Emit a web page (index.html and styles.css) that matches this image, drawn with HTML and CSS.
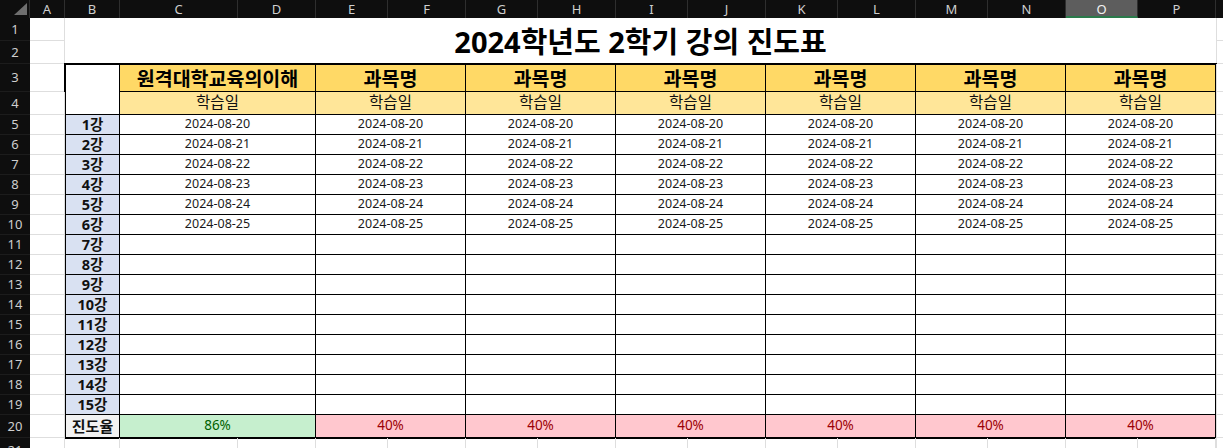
FILE: index.html
```html
<!DOCTYPE html>
<html lang="ko">
<head>
<meta charset="utf-8">
<title>2024학년도 2학기 강의 진도표</title>
<link rel="stylesheet" href="styles.css">
</head>
<body>
<div class="sheet">
  <!-- column headers -->
  <div class="corner"><svg width="30" height="18" viewBox="0 0 30 18"><polygon points="27,3 27,15 14,15" fill="#6f6f6f"/></svg></div>
  <div class="ch">A</div><div class="ch">B</div><div class="ch">C</div><div class="ch">D</div>
  <div class="ch">E</div><div class="ch">F</div><div class="ch">G</div><div class="ch">H</div>
  <div class="ch">I</div><div class="ch">J</div><div class="ch">K</div><div class="ch">L</div>
  <div class="ch">M</div><div class="ch">N</div><div class="ch sel">O</div><div class="ch">P</div>
  <div class="ch ch-rest"></div>

  <!-- row 1 -->
  <div class="rh">1</div><div class="gc"></div>
  <div class="title">2024학년도 2학기 강의 진도표</div>
  <div class="gc rest"></div>
  <!-- row 2 -->
  <div class="rh">2</div><div class="gc"></div><div class="gc rest"></div>
  <!-- row 3 -->
  <div class="rh">3</div><div class="gc"></div>
  <div class="table">
    <div class="c corner-cell"></div>
    <div class="c subj subj-first">원격대학교육의이해</div>
    <div class="c subj">과목명</div><div class="c subj">과목명</div><div class="c subj">과목명</div>
    <div class="c subj">과목명</div><div class="c subj">과목명</div><div class="c subj">과목명</div>

    <div class="c day">학습일</div><div class="c day">학습일</div><div class="c day">학습일</div><div class="c day">학습일</div>
    <div class="c day">학습일</div><div class="c day">학습일</div><div class="c day">학습일</div>

    <div class="c lab">1강</div><div class="c">2024-08-20</div><div class="c">2024-08-20</div><div class="c">2024-08-20</div><div class="c">2024-08-20</div><div class="c">2024-08-20</div><div class="c">2024-08-20</div><div class="c">2024-08-20</div>
    <div class="c lab">2강</div><div class="c">2024-08-21</div><div class="c">2024-08-21</div><div class="c">2024-08-21</div><div class="c">2024-08-21</div><div class="c">2024-08-21</div><div class="c">2024-08-21</div><div class="c">2024-08-21</div>
    <div class="c lab">3강</div><div class="c">2024-08-22</div><div class="c">2024-08-22</div><div class="c">2024-08-22</div><div class="c">2024-08-22</div><div class="c">2024-08-22</div><div class="c">2024-08-22</div><div class="c">2024-08-22</div>
    <div class="c lab">4강</div><div class="c">2024-08-23</div><div class="c">2024-08-23</div><div class="c">2024-08-23</div><div class="c">2024-08-23</div><div class="c">2024-08-23</div><div class="c">2024-08-23</div><div class="c">2024-08-23</div>
    <div class="c lab">5강</div><div class="c">2024-08-24</div><div class="c">2024-08-24</div><div class="c">2024-08-24</div><div class="c">2024-08-24</div><div class="c">2024-08-24</div><div class="c">2024-08-24</div><div class="c">2024-08-24</div>
    <div class="c lab">6강</div><div class="c">2024-08-25</div><div class="c">2024-08-25</div><div class="c">2024-08-25</div><div class="c">2024-08-25</div><div class="c">2024-08-25</div><div class="c">2024-08-25</div><div class="c">2024-08-25</div>
    <div class="c lab">7강</div><div class="c"></div><div class="c"></div><div class="c"></div><div class="c"></div><div class="c"></div><div class="c"></div><div class="c"></div>
    <div class="c lab">8강</div><div class="c"></div><div class="c"></div><div class="c"></div><div class="c"></div><div class="c"></div><div class="c"></div><div class="c"></div>
    <div class="c lab">9강</div><div class="c"></div><div class="c"></div><div class="c"></div><div class="c"></div><div class="c"></div><div class="c"></div><div class="c"></div>
    <div class="c lab">10강</div><div class="c"></div><div class="c"></div><div class="c"></div><div class="c"></div><div class="c"></div><div class="c"></div><div class="c"></div>
    <div class="c lab">11강</div><div class="c"></div><div class="c"></div><div class="c"></div><div class="c"></div><div class="c"></div><div class="c"></div><div class="c"></div>
    <div class="c lab">12강</div><div class="c"></div><div class="c"></div><div class="c"></div><div class="c"></div><div class="c"></div><div class="c"></div><div class="c"></div>
    <div class="c lab">13강</div><div class="c"></div><div class="c"></div><div class="c"></div><div class="c"></div><div class="c"></div><div class="c"></div><div class="c"></div>
    <div class="c lab">14강</div><div class="c"></div><div class="c"></div><div class="c"></div><div class="c"></div><div class="c"></div><div class="c"></div><div class="c"></div>
    <div class="c lab">15강</div><div class="c"></div><div class="c"></div><div class="c"></div><div class="c"></div><div class="c"></div><div class="c"></div><div class="c"></div>

    <div class="c total">진도율</div>
    <div class="c good">86%</div>
    <div class="c bad">40%</div><div class="c bad">40%</div><div class="c bad">40%</div>
    <div class="c bad">40%</div><div class="c bad">40%</div><div class="c bad">40%</div>
  </div>
  <div class="gc rest"></div>
  <!-- rows 4..20 -->
  <div class="rh">4</div><div class="gc"></div><div class="gc rest"></div>
  <div class="rh">5</div><div class="gc"></div><div class="gc rest"></div>
  <div class="rh">6</div><div class="gc"></div><div class="gc rest"></div>
  <div class="rh">7</div><div class="gc"></div><div class="gc rest"></div>
  <div class="rh">8</div><div class="gc"></div><div class="gc rest"></div>
  <div class="rh">9</div><div class="gc"></div><div class="gc rest"></div>
  <div class="rh">10</div><div class="gc"></div><div class="gc rest"></div>
  <div class="rh">11</div><div class="gc"></div><div class="gc rest"></div>
  <div class="rh">12</div><div class="gc"></div><div class="gc rest"></div>
  <div class="rh">13</div><div class="gc"></div><div class="gc rest"></div>
  <div class="rh">14</div><div class="gc"></div><div class="gc rest"></div>
  <div class="rh">15</div><div class="gc"></div><div class="gc rest"></div>
  <div class="rh">16</div><div class="gc"></div><div class="gc rest"></div>
  <div class="rh">17</div><div class="gc"></div><div class="gc rest"></div>
  <div class="rh">18</div><div class="gc"></div><div class="gc rest"></div>
  <div class="rh">19</div><div class="gc"></div><div class="gc rest"></div>
  <div class="rh">20</div><div class="gc"></div><div class="gc rest"></div>
  <!-- row 21 -->
  <div class="rh rh-last">21</div>
  <div class="gc"></div><div class="gc"></div><div class="gc"></div><div class="gc"></div>
  <div class="gc"></div><div class="gc"></div><div class="gc"></div><div class="gc"></div>
  <div class="gc"></div><div class="gc"></div><div class="gc"></div><div class="gc"></div>
  <div class="gc"></div><div class="gc"></div><div class="gc"></div><div class="gc"></div>
  <div class="gc rest"></div>
</div>
</body>
</html>
```

FILE: styles.css
```css
* { box-sizing: border-box; }

html, body {
  margin: 0;
  padding: 0;
  background: #ffffff;
  overflow: hidden;
}

body {
  width: 1223px;
  height: 448px;
  font-family: "Noto Sans", "Noto Sans CJK KR", sans-serif;
  color: #000;
}

.sheet {
  display: grid;
  width: 1223px;
  height: 448px;
  grid-template-columns: 30px 35px 55px 118px 78px repeat(6, 72px 78px) 1fr;
  grid-template-rows: 18px 23px 23px 28px 23px repeat(15, 20px) 23px 1fr;
  overflow: hidden;
}

/* ---- column headers ---- */
.corner {
  background: #0e0e0e;
  border-right: 1px solid #2c2c2c;
}
.corner svg { display: block; }

.ch {
  background: #0e0e0e;
  color: #cfcfcf;
  border-right: 1px solid #2e2e2e;
  font-size: 13px;
  line-height: 1;
  display: flex;
  align-items: center;
  justify-content: center;
  padding-top: 1px;
}
.ch.sel {
  background: #5d5d5d;
  color: #f2f2f2;
  border-bottom: 2px solid #2b7a4b;
  padding-top: 2px;
}
.ch-rest { border-right: none; }

/* ---- row headers ---- */
.rh {
  background: #0e0e0e;
  color: #cfcfcf;
  font-size: 13px;
  line-height: 1;
  display: flex;
  align-items: center;
  justify-content: center;
  border-bottom: 1px solid #1c1c1c;
}
.rh-last { align-items: flex-start; padding-top: 6px; }

/* ---- gridline cells ---- */
.gc {
  border-right: 1px solid #dedede;
  border-bottom: 1px solid #dedede;
}
.gc.rest {
  border-right: none;
  border-left: 1px solid #dedede;
}

/* ---- title ---- */
.title {
  grid-column: span 15;
  grid-row: span 2;
  display: flex;
  align-items: center;
  justify-content: center;
  font-size: 29px;
  font-weight: 700;
  line-height: 1;
  padding-top: 1px;
  background: #fff;
}

/* ---- table ---- */
.table {
  grid-column: span 15;
  grid-row: span 18;
  display: grid;
  grid-template-columns: 54px 196px repeat(6, 150px);
  grid-template-rows: 27px 23px repeat(15, 20px) 23px;
  border-top: 1px solid #000;
  border-left: 1px solid #000;
  outline: 1px solid #000;
  background: #fff;
}

.c {
  border-right: 1px solid #000;
  border-bottom: 1px solid #000;
  display: flex;
  align-items: center;
  justify-content: center;
  font-size: 12.5px;
  line-height: 1;
  color: #1a1a1a;
  white-space: nowrap;
}

.corner-cell {
  grid-row: span 2;
  background: #fff;
}

.subj {
  background: #ffd966;
  font-size: 19.5px;
  font-weight: 700;
  color: #000;
  padding-top: 1px;
}

.day {
  background: #ffe699;
  font-size: 15.5px;
  color: #111;
}

.lab {
  background: #d9e1f2;
  font-size: 14.5px;
  font-weight: 700;
  color: #111;
}

.total {
  background: #f2f2f2;
  font-size: 15px;
  font-weight: 700;
  color: #111;
}

.good {
  background: #c6efce;
  color: #006100;
  font-size: 13.5px;
}

.bad {
  background: #ffc7ce;
  color: #9c0006;
  font-size: 13.5px;
}
```
